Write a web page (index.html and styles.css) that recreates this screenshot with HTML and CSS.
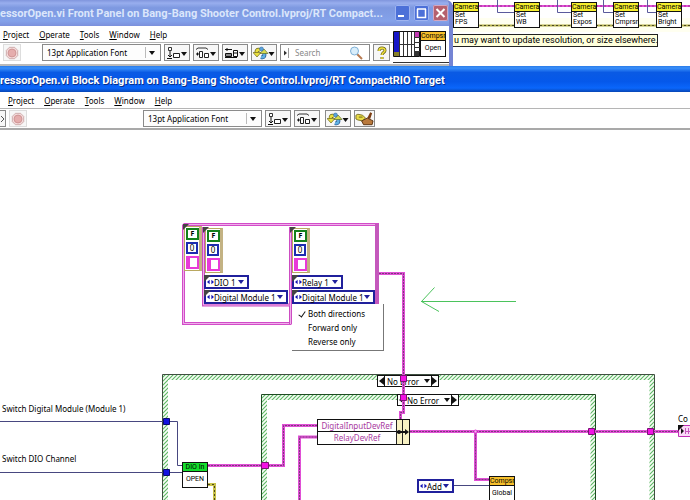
FILE: index.html
```
<!DOCTYPE html>
<html lang="en">
<head>
<meta charset="UTF-8">
<meta name="viewport" content="width=device-width, initial-scale=1.0">
<title>CompressorOpen.vi</title>
<link rel="stylesheet" href="styles.css">
</head>
<body>

<!-- shared toolbar icons -->
<svg class="defs" width="0" height="0" aria-hidden="true">
  <symbol id="i-stop" viewBox="0 0 16 16">
    <path d="M5 1.500h6l3.500 3.500v6l-3.500 3.500h-6l-3.500-3.500v-6z" fill="#f3dada" stroke="#c9a5a5"/>
    <circle cx="8" cy="8" r="4.500" fill="#e5adad" stroke="#cc9090"/>
  </symbol>
  <symbol id="i-align" viewBox="0 0 22 14">
    <path d="M2.500 1.500h3v3h-3z" fill="#fff" stroke="#333"/>
    <path d="M4 5v6M2 9l2 2 2-2M1 12.500h5" fill="none" stroke="#111"/>
    <path d="M7.500 7.500h6v4h-6z" fill="#fff" stroke="#222"/>
    <path d="M15 6h6l-3 4z" fill="#111"/>
  </symbol>
  <symbol id="i-dist" viewBox="0 0 22 14">
    <path d="M1 3.500l2-1.500h8l2 1.500" fill="none" stroke="#333"/>
    <path d="M1 8h3M2.500 6.500v3" stroke="#111"/>
    <path d="M4.500 5.500h3v6h-3zM9.500 7.500h4v4h-4z" fill="#fff" stroke="#222"/>
    <path d="M15 6h6l-3 4z" fill="#111"/>
  </symbol>
  <symbol id="i-resize" viewBox="0 0 22 14">
    <path d="M1 3.500h7M1 11.500h12M3 2v3M1.500 7.500h6v3h-6zM9.500 4.500h4v6h-4z" fill="#fff" stroke="#111"/>
    <path d="M2 9h5M10 7h4" stroke="#111"/>
    <path d="M15 6h6l-3 4z" fill="#111"/>
  </symbol>
  <symbol id="i-order" viewBox="0 0 22 14">
    <path d="M7 4C4 3 3 5 4 7" fill="none" stroke="#6b671f" stroke-width="4"/>
    <path d="M7 4C4 3 3 5 4 7" fill="none" stroke="#eadf3f" stroke-width="2.500"/>
    <path d="M0 6.500h8l-4 4.500z" fill="#eadf3f" stroke="#6b671f" stroke-width=".7"/>
    <path d="M8 11c3 1 4-1 3-4" fill="none" stroke="#2c5d94" stroke-width="4"/>
    <path d="M8 11c3 1 4-1 3-4" fill="none" stroke="#5fb0e2" stroke-width="2.500"/>
    <path d="M7 7.500h8L11 3z" fill="#d8dc50" stroke="#5a6a2c" stroke-width=".7"/>
    <circle cx="8.500" cy="3" r="2" fill="#5aa4dc" stroke="#2c5d94" stroke-width=".5"/>
    <path d="M15.500 6h6l-3 4z" fill="#111"/>
  </symbol>
  <symbol id="i-clean" viewBox="0 0 20 14">
    <path d="M1 3l2-1 5 1 3 3-3 3-5-1-2-1z" fill="#e9dc45" stroke="#7d7424"/>
    <path d="M4 5h4" stroke="#6b641c"/>
    <path d="M16 0l2 1-2 6-3-1z" fill="#7c3d12"/>
    <path d="M7 9l6-3 6 3-1 4h-9z" fill="#b9793c" stroke="#5a3413"/>
  </symbol>
  <symbol id="i-ring" viewBox="0 0 8 6">
    <path d="M0 3l3-2.500v5zM8 3L5 .500v5z" fill="#1515b5"/>
  </symbol>
</svg>

<main class="desktop">

  <section class="camera-vi">
    <svg class="camera-wires" width="238" height="34" viewBox="452 0 238 34" aria-hidden="true">
      <path d="M452 18h238v14h-238z" fill="#fffff0"/>
      <path d="M452 6h238" stroke="#e24fd6" stroke-width="2"/>
      <path d="M452 6h238" stroke="#9b2b93" stroke-dasharray="2 2"/>
      <path d="M452 25.500h238" stroke="#b3b04a" stroke-width="2"/>
      <path d="M452 25.500h238" stroke="#4a4720" stroke-dasharray="2 2"/>
      <path d="M497.500 0v12.500h17M557.500 0v12.500h14M603.500 0v12.500h10M647.500 0v12.500h9" fill="none" stroke="#5a5a9c"/>
    </svg>
    <div class="vi cam" style="left:1px"><b>Camera</b><span>Set<br>FPS</span></div>
    <div class="vi cam" style="left:62px"><b>Camera</b><span>Set<br>WB</span></div>
    <div class="vi cam" style="left:119px"><b>Camera</b><span>Set<br>Expos</span></div>
    <div class="vi cam" style="left:161px"><b>Camera</b><span>Set<br>Cmprsn</span></div>
    <div class="vi cam" style="left:204px"><b>Camera</b><span>Set<br>Bright</span></div>
    <p class="comment">u may want to update resolution, or size elsewhere.</p>
  </section>

  <section class="window front-panel">
    <header class="titlebar">
      <h1>essorOpen.vi Front Panel on Bang-Bang Shooter Control.lvproj/RT Compact...</h1>
      <button class="win-btn" aria-label="Minimize"><svg width="15" height="16"><path d="M3 11h6" stroke="#fff" stroke-width="2"/></svg></button>
      <button class="win-btn" aria-label="Maximize"><svg width="15" height="16"><path d="M3 4h9M3.500 4v8.500h8V4" fill="none" stroke="#fff" stroke-width="1.500"/></svg></button>
      <button class="win-btn close" aria-label="Close"><svg width="15" height="16"><path d="M3.500 4l8 8M11.500 4l-8 8" stroke="#fff" stroke-width="2"/></svg></button>
    </header>
    <div class="panel-body">
      <div class="bars">
        <nav class="menubar">
          <button><u>P</u>roject</button>
          <button><u>O</u>perate</button>
          <button><u>T</u>ools</button>
          <button><u>W</u>indow</button>
          <button><u>H</u>elp</button>
        </nav>
        <div class="toolbar">
          <button class="tool stop" aria-label="Abort"><svg width="14" height="14"><use href="#i-stop"/></svg></button>
          <span class="font-picker"><select aria-label="Font"><option>13pt Application Font</option></select></span>
          <button class="tool" aria-label="Align"><svg width="22" height="14"><use href="#i-align"/></svg></button>
          <button class="tool" aria-label="Distribute"><svg width="22" height="14"><use href="#i-dist"/></svg></button>
          <button class="tool" aria-label="Resize"><svg width="22" height="14"><use href="#i-resize"/></svg></button>
          <button class="tool" aria-label="Reorder"><svg width="22" height="14"><use href="#i-order"/></svg></button>
          <label class="search">
            <svg width="8" height="12" aria-hidden="true"><path d="M1 3.500v5l3-2.500z" fill="#333"/><path d="M5.500 1v10" stroke="#999"/></svg>
            <input type="text" placeholder="Search" aria-label="Search">
            <svg width="15" height="14" aria-hidden="true"><path d="M8 8l5 5" stroke="#b77a50" stroke-width="2"/><circle cx="5.500" cy="5" r="4" fill="#d9eefb" stroke="#7fb0d6"/></svg>
          </label>
          <button class="tool help" aria-label="Help"><svg width="12" height="14"><path d="M3 5c0-4 6-4 6-.500 0 2-3 2-3 4.500M6 11v2" fill="none" stroke="#6b641c" stroke-width="3"/><path d="M3 5c0-4 6-4 6-.500 0 2-3 2-3 4.500M6 11v2" fill="none" stroke="#f0e23c" stroke-width="1.500"/></svg></button>
        </div>
      </div>
      <div class="vi-icons">
        <svg width="27" height="26" aria-hidden="true">
          <path d="M.500.500h26v25h-26z" fill="#fff" stroke="#111"/>
          <path d="M1 1h5v20h-5z" fill="#1717c8"/><path d="M1 21h5v4h-5z" fill="#87802a"/>
          <path d="M6.500 1v24M10.500 1v24M14.500 1v24M18.500 1v24M21.500 1v24M6 13.500h15M22 6.500h5M22 11.500h5M22 16.500h5M22 20.500h5" stroke="#333"/>
          <path d="M22 1h4v5h-4z" fill="#c23ab2"/><path d="M22 21h4v4h-4z" fill="#333"/>
        </svg>
        <div class="vi compsr"><b>Compsr</b><span class="mid">Open</span></div>
      </div>
    </div>
  </section>

  <section class="window block-diagram">
    <header class="titlebar">
      <h1>ressorOpen.vi Block Diagram on Bang-Bang Shooter Control.lvproj/RT CompactRIO Target</h1>
    </header>
    <nav class="menubar">
      <button><u>P</u>roject</button>
      <button><u>O</u>perate</button>
      <button><u>T</u>ools</button>
      <button><u>W</u>indow</button>
      <button><u>H</u>elp</button>
    </nav>
    <div class="toolbar">
      <button class="tool cut" aria-label="Run continuously"><svg width="4" height="14"><path d="M0 4l3 3-3 3" fill="none" stroke="#555"/></svg></button>
      <button class="tool stop" aria-label="Abort"><svg width="14" height="14"><use href="#i-stop"/></svg></button>
      <span class="font-picker"><select aria-label="Font"><option>13pt Application Font</option></select></span>
      <button class="tool" aria-label="Align"><svg width="22" height="14"><use href="#i-align"/></svg></button>
      <button class="tool" aria-label="Distribute"><svg width="22" height="14"><use href="#i-dist"/></svg></button>
      <button class="tool order" aria-label="Reorder"><svg width="22" height="14"><use href="#i-order"/></svg></button>
      <button class="tool clean" aria-label="Clean up diagram"><svg width="19" height="14"><use href="#i-clean"/></svg></button>
    </div>

    <div class="canvas">
      <!-- case structures and cluster borders -->
      <svg class="layer" width="690" height="370" viewBox="0 130 690 370" aria-hidden="true">
        <defs>
          <pattern id="hatch" width="4" height="4" patternUnits="userSpaceOnUse">
            <path d="M0 0h4v4h-4z" fill="#f8fdf7"/>
            <path d="M-1 1l2-2M0 4l4-4M3 5l2-2" stroke="#5db863" stroke-width="1.100"/>
          </pattern>
        </defs>
        <path d="M165.500 510V377.500H652V510" fill="none" stroke="url(#hatch)" stroke-width="5"/>
        <path d="M162.500 510V374.500H654.500V510" fill="none" stroke="#3f4f40"/>
        <path d="M264.500 510V397.500H593V510" fill="none" stroke="url(#hatch)" stroke-width="5"/>
        <path d="M261.500 510V394.500H595.500V510" fill="none" stroke="#1e4a22"/>

        <g fill="none">
          <path d="M183.500 224.500h194v80M183.500 224.500v99h108" stroke="#d24cc8" stroke-width="3"/>
          <path d="M183.500 224.500h194v80M183.500 224.500v99h108" stroke="#eeb0ea"/>
          <path d="M203.500 227v78h86M290.500 227v97" stroke="#cc4cc2" stroke-width="3"/>
          <path d="M203.500 227v78h86M290.500 227v97" stroke="#eeb0ea"/>
          <path d="M377 224v80" stroke="#c458bc" stroke-width="4"/>
        </g>

        <g stroke="#4bc35c" fill="none">
          <path d="M421 301.500h95"/>
          <path d="M434.500 287.500L421.500 301.500l17.500 10"/>
        </g>
      </svg>

      <div class="element" style="left:184px;top:96px"><i class="bool">F</i><i class="num">0</i><i class="str"></i></div>
      <div class="element" style="left:205px;top:98px"><i class="bool">F</i><i class="num">0</i><i class="str"></i></div>
      <div class="element" style="left:292px;top:98px"><i class="bool">F</i><i class="num">0</i><i class="str"></i></div>

      <label class="ring" style="left:204px;top:145px;width:45px"><svg width="7" height="6"><use href="#i-ring"/></svg><select aria-label="DIO channel"><option>DIO 1</option></select></label>
      <label class="ring" style="left:204px;top:160px;width:84px"><svg width="7" height="6"><use href="#i-ring"/></svg><select aria-label="DIO module"><option>Digital Module 1</option></select></label>
      <label class="ring" style="left:292px;top:145px;width:51px"><svg width="7" height="6"><use href="#i-ring"/></svg><select aria-label="Relay channel"><option>Relay 1</option></select></label>
      <label class="ring" style="left:292px;top:160px;width:83px"><svg width="7" height="6"><use href="#i-ring"/></svg><select aria-label="Relay module"><option>Digital Module 1</option></select></label>
      <label class="ring" style="left:417px;top:349px;width:37px"><svg width="7" height="6"><use href="#i-ring"/></svg><select aria-label="Operation"><option>Add</option></select></label>

      <div class="case" style="left:377px;top:245px"><button aria-label="Previous case"></button><select aria-label="Outer case"><option>No Error</option></select><button class="next" aria-label="Next case"></button></div>
      <div class="case" style="left:397px;top:264px"><button aria-label="Previous case"></button><select aria-label="Inner case"><option>No Error</option></select><button class="next" aria-label="Next case"></button></div>

      <!-- wires and tunnels -->
      <svg class="layer" width="690" height="370" viewBox="0 130 690 370" aria-hidden="true">
        <path d="M183 224h6l-6 6zM203 227h6l-6 6zM290 227h6l-6 6zM204 275h7l-7 7zM204 290h7l-7 7zM292 275h7l-7 7zM292 290h7l-7 7z" fill="#444"/>
        <g fill="none">
          <path d="M379 273.500h24.500v139h-3v7M208 465.500h75.500v-40h33.500M299.500 500v-63h17.500M410 431.500h268M475.500 431.500v48h14" stroke="#e04fd6" stroke-width="3"/>
          <path d="M379 273.500h24.500v139h-3v7M208 465.500h75.500v-40h33.500M299.500 500v-63h17.500M410 431.500h268M475.500 431.500v48h14" stroke="#7d3a7c" stroke-dasharray="2 1"/>
          <path d="M208 484.500h6.500v16" stroke="#c8c24a" stroke-width="3"/>
          <path d="M208 484.500h6.500v16" stroke="#4a4720" stroke-dasharray="2 2"/>
          <path d="M0 421.500h177.500v44h5M0 472.500h182M454 485.500h36" stroke="#474780"/>
        </g>
        <g fill="#1212e0" stroke="#0b0b70"><path d="M163.500 418.500h6v6h-6zM163.500 469.500h6v6h-6z"/></g>
        <g fill="#f312e4" stroke="#7a1474"><path d="M400.500 375.500h6v6h-6zM400.500 394.500h6v6h-6zM261.500 462.500h7v6h-7zM588.500 428.500h6v6h-6zM647.500 428.500h6v6h-6z"/></g>
        <circle cx="475.500" cy="431.500" r="1.500" fill="#f7b8f2" stroke="#e03fd4"/>
        <path d="M678.500 425.500h12v11h-12z" fill="#fbd9f8" stroke="#c030b6"/>
        <path d="M678 425h6l-6 6zM681 428v6l3-3z" fill="#111"/>
        <path d="M685.500 428v6M688.500 428v6M685 431.500h5" stroke="#c458bc"/>
      </svg>

      <span class="label" style="left:2px;top:273px">Switch Digital Module (Module 1)</span>
      <span class="label" style="left:2px;top:323px">Switch DIO Channel</span>
      <span class="label" style="left:678px;top:283px">Co</span>

      <div class="bundle" style="left:317px;top:289px">
        <div class="names"><span>DigitalInputDevRef</span><span>RelayDevRef</span></div>
        <svg width="13" height="24" aria-hidden="true"><path d="M0 0h13v24h-13z" fill="#f8f2c4"/><path d="M.500 0v24M6.500 0v24" stroke="#222"/><path d="M1 12h10" stroke="#111" stroke-width="2"/><path d="M9 9l4 3-4 3z" fill="#111"/><circle cx="3" cy="12" r="2" fill="#111"/></svg>
      </div>

      <div class="vi dio" style="left:182px;top:332px"><b>DIO In</b><span class="mid">OPEN</span></div>
      <div class="vi compsr" style="left:489px;top:346px"><b>Compsr</b><span class="mid">Global</span></div>

      <div class="popup" role="menu" style="left:292px;top:174px">
        <button role="menuitemradio" aria-checked="true">Both directions</button>
        <button role="menuitemradio" aria-checked="false">Forward only</button>
        <button role="menuitemradio" aria-checked="false">Reverse only</button>
      </div>
    </div>
  </section>

</main>

</body>
</html>
```

FILE: styles.css
```
* {
  box-sizing: border-box;
}
html, body {
  height: 100%;
  margin: 0;
  overflow: hidden;
}
body {
  font-family: "Noto Sans", "Liberation Sans", sans-serif;
  font-size: 8px;
  color: #000;
  background-color: #fff;
}
button, select, input {
  font: inherit;
  color: inherit;
  margin: 0;
  padding: 0;
  border: none;
  background: none;
  appearance: none;
  outline: none;
}
svg {
  display: block;
  flex: none;
}
.defs {
  position: absolute;
}
.desktop {
  position: relative;
  height: 100%;
  overflow: hidden;
}

/* windows */
.window {
  position: absolute;
  left: 0;
  display: flex;
  flex-direction: column;
}
.front-panel {
  top: 0;
  width: 453px;
  height: 70px;
  background-color: #b9b9b9;
  border-right: 4px solid #7484d4;
  border-radius: 0 7px 0 0;
  overflow: hidden;
}
.block-diagram {
  top: 66px;
  right: 0;
  bottom: 0;
  background-color: #fff;
}
.titlebar {
  display: flex;
  align-items: center;
  height: 26px;
  gap: 4px;
  padding-right: 1px;
}
.titlebar h1 {
  flex: 1;
  margin: 0;
  font-family: Roboto, "Liberation Sans", sans-serif;
  font-size: 11px;
  font-weight: bold;
  white-space: nowrap;
}
.front-panel .titlebar {
  background: linear-gradient(#8095dd, #98aeee 12%, #7d98e0 30%, #84a2ea 80%, #7b90dc);
}
.front-panel h1 {
  color: #dbe6fb;
}
.block-diagram .titlebar {
  padding-top: 2px;
  background: linear-gradient(#2a7be8, #3a90fa 8%, #0a5ae4 25%, #0558ea 60%, #0a66fb 85%, #0846b4);
}
.block-diagram h1 {
  color: #fff;
  text-shadow: 1px 1px 0 #0a2f8c;
}
.win-btn {
  width: 15px;
  height: 16px;
  border-radius: 2px;
  background-color: #4c70d8;
  box-shadow: inset 0 0 0 1px #9fb4f0;
}
.win-btn.close {
  background-color: #b5606e;
  box-shadow: inset 0 0 0 1px #d3a6c0;
}

/* menus and toolbars */
.panel-body {
  display: flex;
  height: 38px;
  background-color: #fff;
}
.bars {
  width: 393px;
}
.menubar {
  display: flex;
  align-items: center;
  gap: 10px;
  height: 16px;
  padding-left: 3px;
}
.toolbar {
  display: flex;
  align-items: center;
  gap: 3px;
  height: 20px;
  border-top: 1px solid #b5b5b5;
}
.block-diagram .menubar {
  padding-left: 8px;
}
.block-diagram .toolbar {
  height: 22px;
  border-bottom: 2px solid #a9a9a9;
}
.tool {
  display: flex;
  align-items: center;
  justify-content: center;
  width: 26px;
  height: 17px;
  border: 1px solid #8a8a8a;
  background-color: #f7f7f7;
}
.tool.stop {
  width: 18px;
  border-color: #ddd;
}
.front-panel .stop {
  margin: 0 18px 0 3px;
}
.block-diagram .stop {
  margin-right: 113px;
}
.tool.cut {
  width: 6px;
  border-left: none;
}
.tool.order {
  margin-left: 2px;
}
.tool.clean {
  width: 21px;
}
.tool.help {
  width: 17px;
}
.font-picker {
  position: relative;
  display: flex;
  width: 119px;
  height: 17px;
  border: 1px solid #8a8a8a;
  background-color: #fdfdfd;
}
.font-picker select {
  width: 100%;
  padding-left: 4px;
}
.font-picker::before {
  content: "";
  position: absolute;
  right: 14px;
  top: 2px;
  bottom: 2px;
  border-left: 1px solid #bbb;
}
.font-picker::after, .ring::after {
  content: "";
  position: absolute;
  right: 5px;
  top: 6px;
  border: 3px solid transparent;
  border-top: 4px solid #111;
  border-bottom: none;
}
.search {
  display: flex;
  align-items: center;
  gap: 4px;
  width: 90px;
  height: 17px;
  padding: 0 5px 0 2px;
  border: 1px solid #8a8a8a;
}
.search input {
  flex: 1;
  min-width: 0;
}
.search input::placeholder {
  color: #888;
}
.vi-icons {
  display: flex;
  flex: 1;
  height: 37px;
  padding-top: 5px;
  border-bottom: 1px solid #333;
}

/* VI icons */
.vi {
  display: flex;
  flex-direction: column;
  width: 26px;
  height: 26px;
  border: 1px solid #111;
  background-color: #fff;
  font-family: Roboto, "Liberation Sans", sans-serif;
  font-size: 7px;
  line-height: 7px;
  overflow: hidden;
}
.vi b {
  height: 9px;
  border-bottom: 1px solid #111;
  line-height: 8px;
  font-weight: normal;
  text-align: center;
}
.vi span {
  padding-left: 1px;
}
.vi .mid {
  padding: 4px 0 0;
  text-align: center;
}
.cam {
  position: absolute;
  top: 2px;
}
.cam b {
  background-color: #f5ee2e;
}
.compsr b {
  background-color: #f7c02c;
}
.dio b {
  background-color: #14dc2c;
}
.canvas .vi {
  position: absolute;
}

/* vision VI showing behind the windows */
.camera-vi {
  position: absolute;
  left: 452px;
  right: 0;
  top: 0;
  height: 66px;
  overflow: hidden;
}
.camera-wires {
  position: absolute;
}
.comment {
  width: 206px;
  height: 13px;
  margin: 34px 0 0;
  padding-left: 1px;
  border: 1px solid #222;
  background-color: #ffffdc;
  font-family: Roboto, "Liberation Sans", sans-serif;
  font-size: 9px;
  line-height: 11px;
  white-space: nowrap;
}

/* diagram */
.canvas {
  position: relative;
  flex: 1;
  overflow: hidden;
}
.layer {
  position: absolute;
  left: 0;
  top: 0;
  pointer-events: none;
}
.label {
  position: absolute;
  line-height: 12px;
  white-space: nowrap;
}
.element {
  position: absolute;
  display: flex;
  flex-direction: column;
  align-items: flex-start;
  gap: 2px;
  width: 18px;
  height: 45px;
  padding: 1px;
  border: 1px solid #b9a860;
  border-right: 3px solid #c3b283;
  background-color: #fff;
}
.element i {
  width: 13px;
  height: 12px;
  font-style: normal;
  text-align: center;
}
.bool {
  border: 2px solid #14801c;
  font-size: 7px;
  font-weight: bold;
  line-height: 8px;
}
.element .num {
  width: 12px;
  border: 2px solid #1c2cb0;
  line-height: 8px;
}
.element .str {
  height: 14px;
  border: 1px solid #e83ad8;
  border-width: 2px 2px 2px 4px;
}
.ring {
  position: absolute;
  display: flex;
  align-items: center;
  height: 14px;
  padding-left: 1px;
  border: 2px solid #20209c;
  background-color: #fff;
}
.ring select {
  flex: 1;
  min-width: 0;
}
.ring::after {
  right: 3px;
  top: 3px;
  border-top-color: #20209c;
}
.case {
  position: absolute;
  display: flex;
  width: 62px;
  height: 12px;
  border: 1px solid #111;
  background-color: #fff;
}
.case select {
  flex: 1;
  min-width: 0;
  padding-left: 2px;
  border: solid #111;
  border-width: 0 1px;
}
.case button {
  width: 6px;
}
.case button::before, .case::after {
  content: "";
  display: block;
  border: 4px solid transparent;
  border-right: 5px solid #111;
  border-left: none;
}
.case .next::before {
  border-right: none;
  border-left: 5px solid #111;
}
.case::after {
  position: absolute;
  right: 8px;
  top: 3px;
  border: 3px solid transparent;
  border-top: 4px solid #111;
  border-bottom: none;
}
.bundle {
  position: absolute;
  display: flex;
  border: 1px solid #111;
  background-color: #fff;
  color: #a83aa0;
}
.names {
  display: flex;
  flex-direction: column;
  width: 78px;
  text-align: center;
  line-height: 12px;
}
.names span:first-child {
  height: 12px;
  border-bottom: 1px solid #111;
}
.popup {
  position: absolute;
  display: flex;
  flex-direction: column;
  width: 92px;
  padding: 2px 0;
  border-right: 1px solid #777;
  border-bottom: 1px solid #777;
  background-color: #fff;
}
.popup button {
  height: 14px;
  padding-left: 16px;
  text-align: left;
}
.popup [aria-checked="true"]::before {
  content: "";
  float: left;
  width: 3px;
  height: 6px;
  margin: 2px 0 0 -8px;
  border: solid #111;
  border-width: 0 1px 1px 0;
  transform: rotate(35deg);
}
```
